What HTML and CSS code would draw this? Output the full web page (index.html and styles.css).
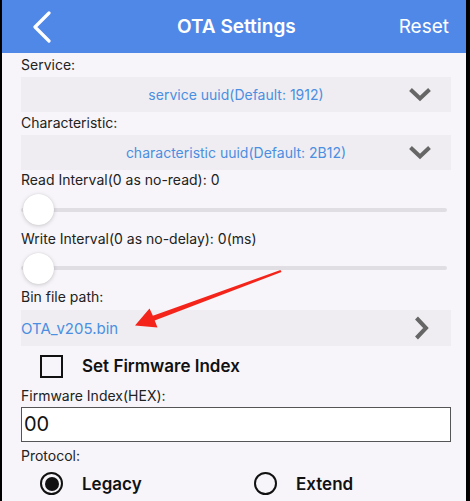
FILE: index.html
```html
<!DOCTYPE html>
<html>
<head>
    <meta charset="UTF-8">
    <title>OTA Settings</title>
    <link rel="stylesheet" href="styles.css">
</head>
<body>
    <div class="screen">
        <div class="nav-bar">
            <svg class="back-btn" width="20" height="32" viewBox="0 0 20 32">
                <path d="M17 2 L3 16 L17 30" fill="none" stroke="#fff" stroke-width="3.2" stroke-linecap="round" stroke-linejoin="round"/>
            </svg>
            <div class="nav-title">OTA Settings</div>
            <div class="nav-action">Reset</div>
        </div>

        <div class="content">
            <div class="label label-first">Service:</div>
            <div class="picker">
                <span class="picker-text">service uuid(Default: 1912)</span>
                <svg class="chevron-down" width="24" height="15" viewBox="0 0 24 15">
                    <path d="M2.5 2.5 L12 11.5 L21.5 2.5" fill="none" stroke="#666" stroke-width="4"/>
                </svg>
            </div>

            <div class="label label-tight">Characteristic:</div>
            <div class="picker">
                <span class="picker-text">characteristic uuid(Default: 2B12)</span>
                <svg class="chevron-down" width="24" height="15" viewBox="0 0 24 15">
                    <path d="M2.5 2.5 L12 11.5 L21.5 2.5" fill="none" stroke="#666" stroke-width="4"/>
                </svg>
            </div>

            <div class="label">Read Interval(0 as no-read): 0</div>
            <div class="slider">
                <div class="slider-track"></div>
                <div class="slider-thumb"></div>
            </div>

            <div class="label">Write Interval(0 as no-delay): 0(ms)</div>
            <div class="slider slider-short">
                <div class="slider-track"></div>
                <div class="slider-thumb"></div>
            </div>

            <div class="label">Bin file path:</div>
            <div class="file-row">
                <span class="file-name">OTA_v205.bin</span>
                <svg class="chevron-right" width="16" height="24" viewBox="0 0 16 24">
                    <path d="M2.5 2 L12 12 L2.5 22" fill="none" stroke="#666" stroke-width="4"/>
                </svg>
            </div>

            <label class="check-row">
                <span class="checkbox"></span>
                <span class="check-text">Set Firmware Index</span>
            </label>

            <div class="label">Firmware Index(HEX):</div>
            <div class="hex-input">00</div>

            <div class="label label-loose">Protocol:</div>
            <div class="radio-group">
                <div class="radio-item">
                    <span class="radio checked"></span>
                    <span class="radio-text">Legacy</span>
                </div>
                <div class="radio-item">
                    <span class="radio"></span>
                    <span class="radio-text">Extend</span>
                </div>
            </div>
        </div>

        <!-- marker pointing at the selected file -->
        <svg class="pointer" width="470" height="501" viewBox="0 0 470 501">
            <polygon points="280.5,270 152.9,315.8 149.5,308.5 135,325.5 157.5,327.5 154.7,320.4 281.5,272" fill="#f5241b"/>
        </svg>
    </div>
</body>
</html>
```

FILE: styles.css
```css
body {
    margin: 0;
    padding: 0;
    background-color: #000;
    font-family: Inter, Roboto, "Noto Sans", Arial, sans-serif;
}

.screen {
    position: relative;
    margin: 0 4px 0 2px;
    height: 501px;
    background-color: #f7f5f9;
    overflow: hidden;
}

.nav-bar {
    height: 53px;
    background-color: #5088e8;
    display: flex;
    align-items: center;
    padding: 0 17px 0 30px;
    color: #fff;
}

.back-btn {
    flex: none;
}

.nav-title {
    flex: 1;
    text-align: center;
    font-size: 19px;
    font-weight: 600;
    margin-left: 22px;
}

.nav-action {
    font-size: 19px;
}

.content {
    padding: 0 15px 0 19px;
}

.label {
    font-size: 14px;
    line-height: 20px;
    color: #222;
}

.label-first {
    margin-top: 2px;
}

.label-tight {
    margin-top: 1px;
}

.label-loose {
    margin-top: 4px;
}

.picker {
    height: 35px;
    margin-top: 2px;
    background-color: #efedf1;
    display: flex;
    align-items: center;
    padding-right: 19px;
}

.picker-text {
    flex: 1;
    text-align: center;
    color: #4a8fe2;
    font-size: 14px;
    padding-left: 43px;
}

.slider {
    position: relative;
    height: 39px;
    display: flex;
    align-items: center;
    padding-right: 4px;
}

.slider-short {
    height: 38px;
}

.slider-track {
    flex: 1;
    height: 4px;
    border-radius: 2px;
    background-color: #e0dee3;
}

.slider-thumb {
    position: absolute;
    left: 2px;
    top: 50%;
    width: 31px;
    height: 31px;
    margin-top: -15.5px;
    border-radius: 50%;
    background-color: #fff;
    box-shadow: 0 1px 4px rgba(0, 0, 0, 0.18), 0 0 1px rgba(0, 0, 0, 0.12);
}

.file-row {
    height: 36px;
    margin-top: 3px;
    background-color: #efedf1;
    display: flex;
    align-items: center;
    justify-content: space-between;
    padding-right: 21px;
}

.file-name {
    color: #4a8fe2;
    font-size: 15px;
}

.check-row {
    display: flex;
    align-items: center;
    height: 40px;
    padding-left: 19px;
}

.checkbox {
    width: 19px;
    height: 19px;
    border: 2px solid #111;
    margin-right: 19px;
}

.check-text {
    font-size: 17px;
    font-weight: 600;
    color: #111;
}

.hex-input {
    height: 33px;
    margin-top: 1px;
    border: 1px solid #555;
    background-color: #fff;
    font-size: 20px;
    line-height: 33px;
    padding-left: 2px;
    color: #111;
}

.radio-group {
    display: flex;
    height: 35px;
    align-items: center;
    padding-left: 19px;
}

.radio-item {
    flex: none;
    display: flex;
    align-items: center;
    width: 214px;
}

.radio {
    width: 19px;
    height: 19px;
    border: 2px solid #111;
    border-radius: 50%;
    margin-right: 19px;
    display: flex;
    align-items: center;
    justify-content: center;
}

.radio.checked::after {
    content: '';
    width: 14px;
    height: 14px;
    border-radius: 50%;
    background-color: #111;
}

.radio-text {
    font-size: 17px;
    font-weight: 600;
    color: #111;
}

.pointer {
    position: absolute;
    left: -2px;
    top: 0;
    pointer-events: none;
}
```
